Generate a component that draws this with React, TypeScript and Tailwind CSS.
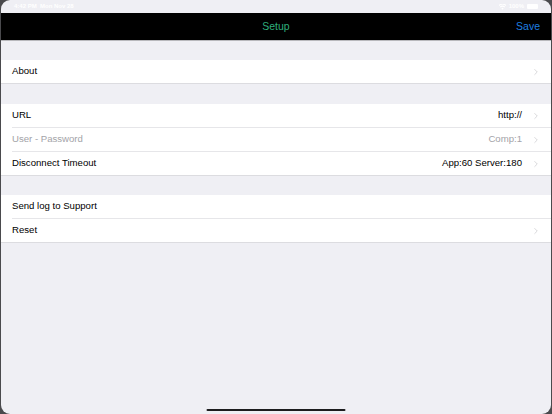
import { ChevronRight } from 'lucide-react';

const font = { fontFamily: '"Liberation Sans", Arial, sans-serif' };

type Row = { label: string; value?: string; muted?: boolean; chevron?: boolean };

const sections: Row[][] = [
  [{ label: 'About', chevron: true }],
  [
    { label: 'URL', value: 'http://', chevron: true },
    { label: 'User - Password', value: 'Comp:1', muted: true, chevron: true },
    { label: 'Disconnect Timeout', value: 'App:60 Server:180', chevron: true },
  ],
  [
    { label: 'Send log to Support' },
    { label: 'Reset', chevron: true },
  ],
];

function SettingRow({ row, last }: { row: Row; last: boolean }) {
  return (
    <div className={`flex h-6 items-center bg-white pl-[11px] ${last ? 'border-b border-[#dcdce0]' : ''}`}>
      <div
        className={`flex h-full flex-1 items-center pr-[10px] ${last ? '' : 'border-b border-[#e6e6e9]'}`}
      >
        <span className={`flex-1 text-[9.6px] ${row.muted ? 'text-[#a3a3a8]' : 'text-black'}`}>
          {row.label}
        </span>
        {row.value && (
          <span className={`mr-[9px] text-[9.6px] ${row.muted ? 'text-[#a3a3a8]' : 'text-black'}`}>
            {row.value}
          </span>
        )}
        {row.chevron && <ChevronRight className="h-[10px] w-[10px] text-[#c4c4c8]" strokeWidth={1.6} />}
      </div>
    </div>
  );
}

export default function App() {
  return (
    <div className="h-[414px] w-[552px] bg-[#4a4a4d] px-px" style={font}>
      <div className="relative flex h-full flex-col overflow-hidden rounded-[9px] bg-[#efeff4]">
        {/* status bar */}
        <div className="flex h-[13px] items-center justify-between px-[13px] text-[6px] font-semibold text-white">
          <span>4:42 PM&nbsp;&nbsp;Mon Nov 28</span>
          <div className="flex items-center gap-[3px]">
            <svg width="7" height="6" viewBox="0 0 12 10" fill="white">
              <path d="M6 9.5 8 7.3a3 3 0 0 0-4 0zM2.6 6a5 5 0 0 1 6.8 0l1.3-1.4a7 7 0 0 0-9.4 0zM0 3.3a9 9 0 0 1 12 0L13 2A11 11 0 0 0-1 2z" />
            </svg>
            <span>100%</span>
            <div className="h-[5px] w-[11px] rounded-[1px] bg-white" />
          </div>
        </div>

        {/* nav bar */}
        <div className="relative flex h-[28px] items-center justify-center border-b border-[#b8b8bc] bg-black">
          <span className="text-[10.5px] text-[#2fae7c]">Setup</span>
          <span className="absolute right-[11px] text-[10.5px] text-[#1e7fe0]">Save</span>
        </div>

        <div className="flex flex-col pt-[19px]">
          {sections.map((section, i) => (
            <div key={i} className={i === 1 ? 'mt-[20px]' : i === 2 ? 'mt-[19px]' : ''}>
              {section.map((row, j) => (
                <SettingRow key={row.label} row={row} last={j === section.length - 1} />
              ))}
            </div>
          ))}
        </div>

        {/* home indicator */}
        <div className="absolute bottom-[3px] left-1/2 h-[2px] w-[139px] -translate-x-1/2 rounded-full bg-[#1c1c1e]" />
      </div>
    </div>
  );
}
